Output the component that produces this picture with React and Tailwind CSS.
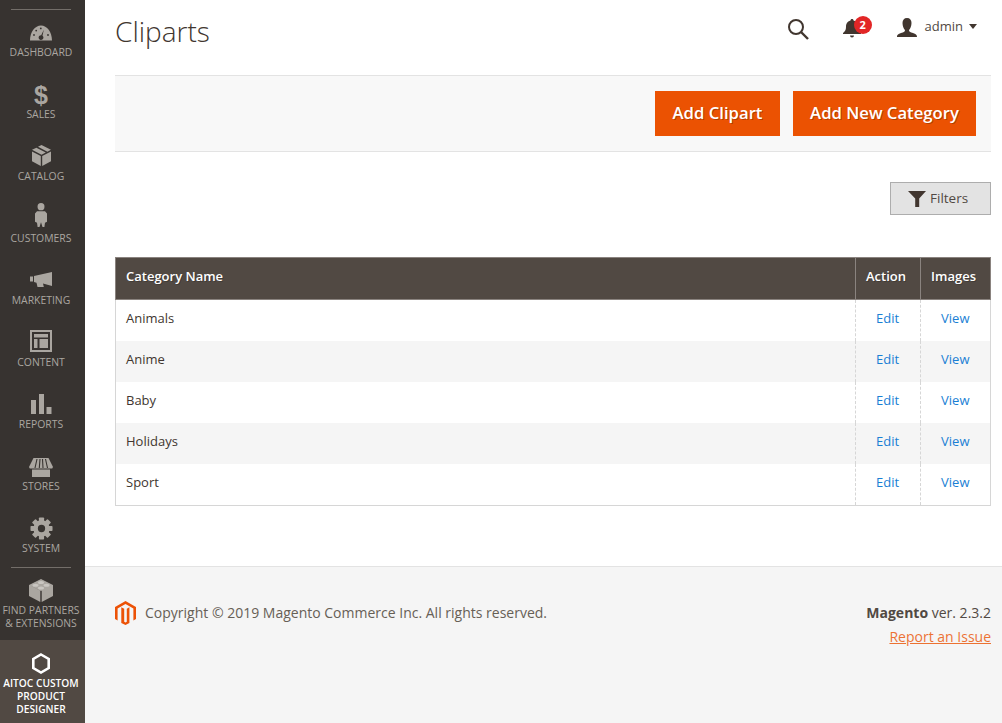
import React from 'react';

const font = { fontFamily: '"Open Sans", sans-serif' };

const Gauge = () => (
  <svg width="22" height="16" viewBox="0 0 22 16">
    <path fill="#aaa6a0" fillRule="evenodd" d="M0 15.500C0 7 5 .5 11 .5S22 7 22 15.500ZM13.800 4.800l-2.600 5.400a2.400 2.400 0 1 0 1.300.5Z" />
    <circle cx="4" cy="10" r=".9" fill="#373330" />
    <circle cx="6.200" cy="5.600" r=".9" fill="#373330" />
    <circle cx="10.800" cy="3.400" r=".9" fill="#373330" />
    <circle cx="18" cy="10" r=".9" fill="#373330" />
  </svg>
);

const Dollar = () => (
  <span className="font-bold text-[25px] leading-[20px] text-[#aaa6a0]" style={{ fontFamily: '"Liberation Sans", sans-serif' }}>$</span>
);

const Box = () => (
  <svg width="19" height="21" viewBox="0 0 19 20" preserveAspectRatio="none">
    <path fill="#aaa6a0" d="M9.500 0 19 4.600 15.400 6.400 6 1.700ZM4.400 2.500l9.400 4.700-4.300 2.100L0 4.600ZM0 6.200l8.800 4.300V20L0 15.400ZM19 6.200v9.200L10.200 20v-9.500Z" />
  </svg>
);

const Person = () => (
  <svg width="12" height="24" viewBox="0 0 12 23" preserveAspectRatio="none">
    <circle cx="6" cy="3.500" r="3.500" fill="#aaa6a0" />
    <path fill="#aaa6a0" d="M2 8h8l2 2v8l-2 1-.6 4H7.500L6 18.500 4.500 23H2.600L2 19l-2-1v-8Z" />
  </svg>
);

const Megaphone = () => (
  <svg width="22" height="15" viewBox="0 0 22 15">
    <path fill="#aaa6a0" d="M0 4.500h3v5H0ZM4 4 22 0v14l-9-2.500.8 3.500H7.500l-1-4.300L4 10Z" />
  </svg>
);

const Layout = () => (
  <svg width="22" height="22" viewBox="0 0 22 22">
    <path fill="#aaa6a0" fillRule="evenodd" d="M0 0h22v22H0Zm2 2v18h18V2Z" />
    <path fill="#aaa6a0" d="M4 4h14v3.500H4ZM4 9h3.500v9H4ZM9.500 9H18v9H9.500Z" />
  </svg>
);

const Bars = () => (
  <svg width="21" height="20" viewBox="0 0 21 20">
    <path fill="#aaa6a0" d="M0 6h5v14H0ZM8 0h5v20H8ZM15.500 13h5v7h-5Z" />
  </svg>
);

const Store = () => (
  <svg width="24" height="19" viewBox="0 0 24 19">
    <path fill="#aaa6a0" d="M4.500 0h15L24 9l-.8 1.500H.8L0 9Z" />
    <path stroke="#373330" strokeWidth="1.100" d="M8 1 6 10M11 1l-.7 9M13.500 1l.5 9M16.500 1l2 9" />
    <path fill="#aaa6a0" d="M3 11.500h18V19H3Z" />
  </svg>
);

const Gear = () => (
  <svg width="23" height="23" viewBox="-12 -12 24 24">
    <g fill="#aaa6a0">
      {[0, 45, 90, 135, 180, 225, 270, 315].map(a => (
        <rect key={a} x="-2.700" y="-11.500" width="5.400" height="6" rx="0.800" transform={`rotate(${a})`} />
      ))}
    </g>
    <path fill="#aaa6a0" fillRule="evenodd" d="M0-8.500a8.500 8.500 0 1 1 0 17 8.500 8.500 0 0 1 0-17Zm0 4.700a3.800 3.800 0 1 0 0 7.600 3.800 3.800 0 0 0 0-7.600Z" />
  </svg>
);

const Brick = () => (
  <svg width="24" height="23" viewBox="0 0 24 23">
    <path fill="#aaa6a0" d="M12 0l12 6v11l-11.300 6V11.500L24 6 12 12 0 6Zm-12 6 11.300 5.700V23L0 17Z" />
    <ellipse cx="12" cy="3.600" rx="3" ry="1.500" fill="#c9c6c1" />
    <ellipse cx="6.500" cy="6.300" rx="3" ry="1.500" fill="#c9c6c1" />
    <ellipse cx="17.500" cy="6.300" rx="3" ry="1.500" fill="#c9c6c1" />
    <ellipse cx="12" cy="9" rx="3" ry="1.500" fill="#c9c6c1" />
  </svg>
);

const Hexagon = () => (
  <svg width="18" height="21" viewBox="0 0 18 21">
    <path fill="none" stroke="#fff" strokeWidth="2.600" d="M9 1.500 16.700 6v9L9 19.500 1.300 15V6Z" />
  </svg>
);

const MagentoLogo = () => (
  <svg width="21" height="24" viewBox="0 0 21 24">
    <path fill="#ec5206" d="M10.500 0 21 6v12l-2.600 1.500V7.500l-7.900-4.600-7.900 4.600v12L0 18V6Z" />
    <path fill="#ec5206" d="M9.200 7.700v13l1.300.8 1.300-.8v-13l2.600-1.500v15.900L10.500 24l-4.200-1.900V6.200Z" />
  </svg>
);

// pb = how far each icon sits above its label, the glyphs aren't aligned evenly
const navItems = [
  ['DASHBOARD', Gauge, 'pb-[5px]'],
  ['SALES', Dollar, 'pb-[3px]'],
  ['CATALOG', Box, 'pb-[4px]'],
  ['CUSTOMERS', Person, 'pb-[5px]'],
  ['MARKETING', Megaphone, 'pb-[7px]'],
  ['CONTENT', Layout, 'pb-[4px]'],
  ['REPORTS', Bars, 'pb-[4px]'],
  ['STORES', Store, 'pb-[3px]'],
  ['SYSTEM', Gear, 'pb-[2px]'],
];

const rows = ['Animals', 'Anime', 'Baby', 'Holidays', 'Sport'];

const Sidebar = () => (
  <aside className="w-[85px] shrink-0 bg-[#373330] flex flex-col text-[#aaa6a0] text-[10.4px] leading-[13px] text-center">
    <div className="ml-[11px] mr-[14px] mt-[9px] border-t border-[#736e69]" />
    {navItems.map(([label, Icon, pb]) => (
      <div key={label} className="h-[62px] pr-[3px] flex flex-col items-center">
        <div className={`h-[36px] flex items-end justify-center ${pb}`}>
          <Icon />
        </div>
        <span>{label}</span>
      </div>
    ))}
    <div className="ml-[11px] mr-[14px] mt-[-1px] border-t border-[#736e69]" />
    <div className="h-[72px] pr-[3px] flex flex-col items-center pt-[11px]">
      <Brick />
      <span className="mt-[2px]">FIND PARTNERS<br />&amp; EXTENSIONS</span>
    </div>
    <div className="flex-1 bg-[#514943] text-white text-[10.2px] font-semibold pr-[3px] flex flex-col items-center pt-[13px]">
      <Hexagon />
      <span className="mt-[3px]">AITOC CUSTOM<br />PRODUCT<br />DESIGNER</span>
    </div>
  </aside>
);

const TopBar = () => (
  <header className="h-[76px] flex justify-between pr-[14px] border-b border-[#e3e3e3] mr-[11px]">
    <h1 className="text-[28px] leading-[38px] font-light text-[#41362f] mt-[12px]">Cliparts</h1>
    <div className="flex items-start pt-[17px]">
      <svg width="22" height="22" viewBox="0 0 22 22" className="mt-[1px]">
        <circle cx="9" cy="9" r="7" fill="none" stroke="#41362f" strokeWidth="2" />
        <path stroke="#41362f" strokeWidth="2.400" d="m14 14 7 7" />
      </svg>
      <div className="relative ml-[34px] mt-[2px] w-[20px]">
        <svg width="18" height="19" viewBox="0 0 18 19">
          <path fill="#41362f" d="M9 0c1 0 1.500.6 1.500 1.500C14 2.500 15 5 15 8c0 3 1 4.500 3 6v1H0v-1c2-1.500 3-3 3-6 0-3 1-5.500 4.500-6.500C7.500.6 8 0 9 0Z" />
          <path fill="#41362f" d="M7 16.500h4a2 2 0 0 1-4 0Z" />
        </svg>
        <span className="absolute left-[11px] top-[-3px] w-[18px] h-[18px] rounded-full bg-[#e22626] text-white text-[11px] leading-[18px] font-bold text-center">2</span>
      </div>
      <svg width="20" height="19" viewBox="0 0 20 19" className="ml-[34px] mt-[1px]">
        <path fill="#41362f" d="M10 0c3 0 4.500 2 4.500 5s-1.300 6-2.500 7c0 1.500 1 2 3 2.800 3 1 5 1.500 5 4.200H0c0-2.700 2-3.200 5-4.200C7 14 8 13.500 8 12 6.800 11 5.500 8 5.500 5S7 0 10 0Z" />
      </svg>
      <span className="ml-[8px] text-[13px] leading-[18px] text-[#514943]">admin</span>
      <span className="ml-[6px] mt-[7px] w-0 h-0 border-x-[4.500px] border-x-transparent border-t-[5px] border-t-[#41362f]" />
    </div>
  </header>
);

const ActionBar = () => (
  <div className="h-[76px] bg-[#f8f8f8] border-b border-[#e3e3e3] mr-[11px] flex items-start justify-end gap-[13px] pt-[15px] pr-[15px]">
    <button className="h-[45px] w-[125px] pb-[2px] bg-[#eb5202] text-white text-[16.700px] font-semibold [text-shadow:1px_1px_0_rgba(0,0,0,0.25)]">Add Clipart</button>
    <button className="h-[45px] w-[183px] pb-[2px] bg-[#eb5202] text-white text-[16.700px] font-semibold [text-shadow:1px_1px_0_rgba(0,0,0,0.25)]">Add New Category</button>
  </div>
);

const Filters = () => (
  <div className="flex justify-end mt-[30px] mr-[11px]">
    <button className="w-[101px] h-[33px] pl-[17px] bg-[#e3e3e3] border border-[#adadad] flex items-center gap-[4px] text-[13.500px] text-[#514943]">
      <svg width="18" height="16" viewBox="0 0 18 16">
        <path fill="#41362f" d="M0 0h18l-6.800 7.500V16H7.200V7.500Z" />
      </svg>
      Filters
    </button>
  </div>
);

const CategoryTable = () => (
  <table className="w-[876px] mt-[42px] ml-[30px] border-collapse table-fixed text-[13px] text-[#41362f]">
    <thead>
      <tr className="h-[42px] bg-[#514943] text-white [text-shadow:1px_1px_0_rgba(0,0,0,0.2)]">
        <th className="text-left font-semibold pl-[10px] pb-[4px] border border-[#8a837f]">Category Name</th>
        <th className="w-[65px] font-semibold pb-[4px] pr-[4px] border border-[#8a837f]">Action</th>
        <th className="w-[70px] font-semibold pb-[4px] pr-[4px] border border-[#8a837f]">Images</th>
      </tr>
    </thead>
    <tbody className="border-b border-[#d6d6d6]">
      {rows.map((name, i) => {
        // the table's collapsed borders eat a pixel, so the last row is taller
        const last = i === rows.length - 1;
        const pad = i === 0 ? 'pb-[4px]' : last ? 'pb-[3px]' : 'pb-[2px]';
        return (
          <tr key={name} className={`${last ? 'h-[42px]' : 'h-[41px]'} ${i % 2 === 1 ? 'bg-[#f5f5f5]' : 'bg-white'}`}>
            <td className={`pl-[10px] border-l border-[#d6d6d6] ${pad}`}>{name}</td>
            <td className={`text-center pr-[1px] text-[#1a7fd4] border-l border-dashed border-[#d6d6d6] ${pad}`}>Edit</td>
            <td className={`text-center pr-[1px] text-[#1a7fd4] border-l border-dashed border-[#d6d6d6] relative ${pad}`}>
              View
              <span className="absolute right-0 top-0 bottom-0 w-px bg-[#d6d6d6]" />
            </td>
          </tr>
        );
      })}
    </tbody>
  </table>
);

const Footer = () => (
  <footer className="mt-auto h-[157px] bg-[#f5f5f5] border-t border-[#e3e3e3] pl-[30px] pr-[11px] pt-[34px] flex justify-between items-start">
    <div className="flex items-center gap-[9px] text-[14px] text-[#676056]">
      <MagentoLogo />
      <span className="mt-[-2px]">Copyright © 2019 Magento Commerce Inc. All rights reserved.</span>
    </div>
    <div className="text-right text-[14px] leading-[24px] text-[#514943]">
      <p><b className="font-bold">Magento</b> ver. 2.3.2</p>
      <a className="text-[#eb5202] underline opacity-80">Report an Issue</a>
    </div>
  </footer>
);

export default function App() {
  return (
    <div className="flex w-[1002px] h-[723px] overflow-hidden bg-white" style={font}>
      <Sidebar />
      <main className="flex-1 flex flex-col min-w-0">
        <div className="pl-[30px]">
          <TopBar />
          <ActionBar />
          <Filters />
        </div>
        <CategoryTable />
        <Footer />
      </main>
    </div>
  );
}
